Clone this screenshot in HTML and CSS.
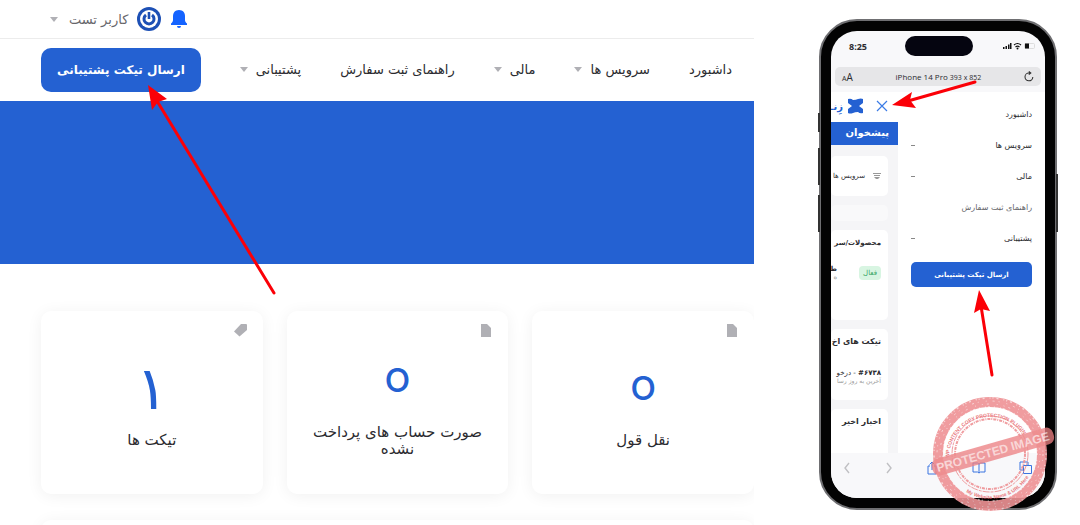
FILE: index.html
```html
<!DOCTYPE html>
<html lang="fa" dir="rtl">
<head>
  <meta charset="UTF-8" />
  <meta name="viewport" content="width=device-width, initial-scale=1.0"/>
  <title>ارسال تیکت پشتیبانی</title>
  <link rel="stylesheet" href="styles.css">
</head>
<body>
  <div class="guide">
    <main class="desktop">
      <div class="topbar">
        <button type="button" class="icon-btn" aria-label="اعلان ها">
          <svg width="18" height="20" viewBox="0 0 18 20" fill="#1463ff"><path d="M9 1c-4 0-6 2.800-6 6.200V11c0 1.500-.6 2.300-2 3.500V16h16v-1.500c-1.400-1.200-2-2-2-3.500V7.200C15 3.800 13 1 9 1z"/><path d="M7 17h4a2 2 0 0 1-4 0z"/></svg>
        </button>
        <svg class="avatar" width="24" height="24" viewBox="0 0 24 24" fill="none"><circle cx="12" cy="12" r="12" fill="#1d50b5"/><circle cx="12" cy="12" r="9" fill="#fff"/><path d="M9 8a5 5 0 1 0 6 0" stroke="#1d50b5" stroke-width="3"/><path d="M12 5v7" stroke="#1d50b5" stroke-width="2.600"/></svg>
        <a href="#" class="user">کاربر تست <span class="caret"></span></a>
      </div>

      <nav class="menu">
        <a href="#">داشبورد</a>
        <a href="#">سرویس ها <span class="caret"></span></a>
        <a href="#">مالی <span class="caret"></span></a>
        <a href="#">راهنمای ثبت سفارش</a>
        <a href="#">پشتیبانی <span class="caret"></span></a>
        <button type="button" class="ticket-btn">ارسال تیکت پشتیبانی</button>
      </nav>

      <div class="hero"></div>

      <div class="cards">
        <a href="#" class="card">
          <svg class="card-icon" width="12" height="13" viewBox="0 0 12 13" fill="#b0b0b5"><path d="M1 0h6l4 4v9H1z"/></svg>
          <span class="count zero">o</span>
          <span class="card-title">نقل قول</span>
        </a>
        <a href="#" class="card">
          <svg class="card-icon" width="12" height="13" viewBox="0 0 12 13" fill="#b0b0b5"><path d="M1 0h6l4 4v9H1z"/></svg>
          <span class="count zero">o</span>
          <span class="card-title">صورت حساب های پرداخت نشده</span>
        </a>
        <a href="#" class="card">
          <svg class="card-icon" width="13" height="13" viewBox="0 0 13 13" fill="#b0b0b5"><path d="M7 0h5q1 0 1 1v5L5.500 12.500 0 7.500z"/></svg>
          <span class="count">۱</span>
          <span class="card-title">تیکت ها</span>
        </a>
      </div>
      <div class="panel"></div>
    </main>

    <aside class="mobile">
      <div class="phone">
        <span class="side-btn mute"></span>
        <span class="side-btn vol-up"></span>
        <span class="side-btn vol-down"></span>
        <span class="side-btn power"></span>
        <div class="screen">
          <div class="status" dir="ltr">
            <span class="time">8:25</span>
            <span class="island"></span>
            <svg width="34" height="8" viewBox="0 0 34 8"><path d="M1 5h1.500v2H1zM3.500 4H5v3H3.500zM6 2.500h1.500V7H6zM8 1h1.500v6H8z" fill="#111"/><path d="M12 3q3.500-3 7 0M13.500 5q2-1.600 4 0" stroke="#111" stroke-width="1.200" fill="none"/><circle cx="15.500" cy="6.500" r="1" fill="#111"/><rect x="22.500" y="1.500" width="10" height="5" rx="1" fill="none" stroke="#ddd"/><path d="M23 1.500h4v5h-4z" fill="#111"/></svg>
          </div>

          <div class="address" dir="ltr">
            <span class="text-size"><small>A</small>A</span>
            <span class="device">iPhone 14 Pro <small>393 x 852</small></span>
            <svg width="10" height="11" viewBox="0 0 10 11" fill="none" stroke="#333" stroke-width="1.100"><path d="M8.800 6A3.900 3.900 0 1 1 5 2h1.500M4.800.5l2 1.500-2 1.700"/></svg>
          </div>

          <div class="view">
            <div class="drawer">
              <a href="#">داشبورد</a>
              <a href="#">سرویس ها <span class="dash"></span></a>
              <a href="#">مالی <span class="dash"></span></a>
              <a href="#" class="light">راهنمای ثبت سفارش</a>
              <a href="#">پشتیبانی <span class="dash"></span></a>
              <button type="button" class="drawer-btn">ارسال تیکت پشتیبانی</button>
            </div>

            <div class="page">
              <div class="page-head">
                <button type="button" class="icon-btn" aria-label="بستن">
                  <svg width="12" height="12" viewBox="0 0 12 12" stroke="#3b7be6" stroke-width="1.200"><path d="M1 1l10 10M11 1L1 11"/></svg>
                </button>
                <svg width="17" height="16" viewBox="0 0 17 16" fill="#2461d2"><path d="M1 1q3-1 5 1 3 0 5-1 3-1 5 0v4l-4 3 4 3v4q-3 1-5-1-3 0-5 1-3 1-5 0v-4l4-3-4-3z"/></svg>
                <span class="brand">زِنـ</span>
              </div>
              <div class="page-title">پیشخوان</div>
              <div class="page-body">
                <div class="box box-link">
                  <svg width="8" height="8" viewBox="0 0 8 8" fill="#999"><path d="M0 1h8v1H0zM1 3h6v1H1zM1 5h6L5 7H3z"/></svg>
                  <span>سرویس ها</span>
                </div>
                <div class="box box-empty"></div>
                <div class="box box-products">
                  <h3>محصولات/سر</h3>
                  <div class="product">
                    <span class="badge">فعال</span>
                    <div>
                      <b>ط</b>
                      <p>ه</p>
                    </div>
                  </div>
                </div>
                <div class="box box-tickets">
                  <h3>تیکت های اخ</h3>
                  <p class="subject"><b>#۶۷۳۸</b> - درخو</p>
                  <p class="updated">آخرین به روز رسا</p>
                </div>
                <div class="box box-news">
                  <h3>اخبار اخیر</h3>
                </div>
              </div>
            </div>
          </div>

          <div class="toolbar" dir="ltr">
            <svg width="8" height="12" viewBox="0 0 8 12" stroke="#c0c0c3" stroke-width="1.400"><path d="M6 1L2 6l4 5"/></svg>
            <svg width="8" height="12" viewBox="0 0 8 12" stroke="#c0c0c3" stroke-width="1.400"><path d="M2 1l4 5-4 5"/></svg>
            <svg width="12" height="14" viewBox="0 0 12 14" stroke="#3b74e0"><path d="M4 5H2v8h8V5H8M6 9V1M3.500 3.500L6 1l2.500 2.500"/></svg>
            <svg width="14" height="12" viewBox="0 0 14 12" stroke="#3b74e0"><path d="M7 2v9M1 1h4.500L7 2l1.500-1H13v9H8.500L7 11l-1.500-1H1z"/></svg>
            <svg width="14" height="14" viewBox="0 0 14 14" stroke="#3b74e0"><path d="M4 9H1V1h8v3M4.500 4.500h8v8h-8z"/></svg>
          </div>
        </div>
      </div>
    </aside>

    <svg class="stamp" width="132" height="120" viewBox="0 0 132 120" direction="ltr">
      <defs>
        <path id="stampTop" d="M25 64A41 41 0 1 1 107 64"/>
        <path id="stampBottom" d="M42 98A45 45 0 0 0 111 60"/>
      </defs>
      <g fill="none" stroke="#ef9295">
        <circle cx="66" cy="60" r="52" stroke-width="10"/>
        <circle cx="66" cy="60" r="38" stroke-width="1" stroke-dasharray="7 1 3 1"/>
        <circle cx="66" cy="60" r="35" stroke-width="2" stroke-dasharray="3 1 1 1"/>
      </g>
      <g fill="none" stroke="#fff" opacity=".6">
        <circle cx="66" cy="60" r="56" stroke-width="1.500" stroke-dasharray="1 3 2 5 1 2"/>
        <circle cx="66" cy="60" r="53" stroke-dasharray="2 4 1 7 1 6"/>
        <circle cx="66" cy="60" r="50" stroke-dasharray="1 6 1 4 2 8"/>
        <circle cx="66" cy="60" r="47" stroke-width="1.500" stroke-dasharray="1 5 1 2 2 4"/>
      </g>
      <g class="stamp-ring">
        <text><textPath href="#stampTop">WP CONTENT COPY PROTECTION PLUGIN</textPath></text>
        <text><textPath href="#stampBottom">My Website Name &amp; URL Here</textPath></text>
      </g>
      <g transform="rotate(-16 69 58)">
        <rect x="6" y="49" width="126" height="17" rx="7" fill="#ec8083" opacity=".85"/>
        <text class="stamp-title" x="69" y="62">PROTECTED IMAGE</text>
      </g>
    </svg>

    <svg class="arrows" width="1080" height="525" viewBox="0 0 1080 525" fill="#fb0007" stroke="#fb0007">
      <g stroke-width="3" stroke-linecap="round">
        <path d="M274 293L157 101"/>
        <path d="M975 82L908 101"/>
        <path d="M992 375L981 306"/>
      </g>
      <g stroke="none">
        <path d="M148 85l4 25 6-8 9-3z"/>
        <path d="M892 105l20-13-2 8 6 8z"/>
        <path d="M979 290l-5 23 7-4 9 2z"/>
      </g>
    </svg>
  </div>
</body>
</html>
```
FILE: styles.css
```css
:root {
  --primary-color: #2461d2;
  --text-color: #2b2b2f;
  --muted: #b0b0b5;
  --shadow: 0 2px 16px rgba(0, 0, 0, 0.06);
}

* {
  margin: 0;
  padding: 0;
  box-sizing: border-box;
}

body {
  background: white;
  color: var(--text-color);
  font-family: "DejaVu Sans", sans-serif;
  font-size: 13px;
  overflow: hidden;
}

a {
  color: inherit;
  text-decoration: none;
}

button {
  border: none;
  font-family: inherit;
  cursor: pointer;
}

svg {
  display: block;
  flex-shrink: 0;
}

.guide {
  position: relative;
  direction: ltr;
  display: flex;
  height: 100vh;
  overflow: hidden;
}

.desktop {
  flex: 1;
  direction: rtl;
  overflow: hidden;
}

.icon-btn {
  background: none;
}

.topbar {
  display: flex;
  flex-direction: row-reverse;
  justify-content: flex-end;
  align-items: center;
  gap: 9px;
  height: 39px;
  padding-left: 50px;
  border-bottom: 1px solid #ececec;
  direction: ltr;
}

.user {
  direction: rtl;
  display: flex;
  align-items: center;
  gap: 11px;
  color: #66666b;
}

.caret {
  border: 4px solid transparent;
  border-top: 5px solid var(--muted);
  border-bottom: none;
}

.menu {
  display: flex;
  justify-content: space-between;
  align-items: center;
  height: 62px;
  padding: 0 22px 2px 41px;
}

.menu a {
  display: flex;
  align-items: center;
  gap: 8px;
  white-space: nowrap;
}

.ticket-btn {
  height: 44px;
  margin-top: 2px;
  padding: 0 16px;
  border-radius: 10px;
  background: var(--primary-color);
  color: white;
  font-size: 12px;
  font-weight: bold;
  white-space: nowrap;
}

.hero {
  height: 163px;
  background: var(--primary-color);
}

.cards {
  display: grid;
  grid-template-columns: repeat(3, 1fr);
  gap: 24px;
  padding: 47px 0 26px 41px;
}

.card {
  position: relative;
  display: flex;
  flex-direction: column;
  align-items: center;
  justify-content: center;
  height: 183px;
  padding: 0 24px;
  border-radius: 10px;
  background: white;
  box-shadow: var(--shadow);
  text-align: center;
}

.card-icon {
  position: absolute;
  top: 13px;
  right: 16px;
}

.count {
  color: var(--primary-color);
  font-size: 60px;
  line-height: 64px;
}

.zero {
  padding-bottom: 8px;
  font-family: Inter, sans-serif;
  font-size: 44px;
  line-height: 56px;
}

.card-title {
  margin-top: 12px;
  font-size: 15px;
  line-height: 17px;
}

.panel {
  height: 60px;
  margin-left: 41px;
  border-radius: 10px;
  box-shadow: var(--shadow);
}

.mobile {
  width: 326px;
  padding: 19px 23px 0 65px;
  direction: rtl;
}

.phone {
  position: relative;
  padding: 10px;
  border: 2px solid #6f6f72;
  border-radius: 38px;
  background: #030303;
}

.side-btn {
  position: absolute;
  left: -3px;
  width: 2px;
  height: 37px;
  background: #333;
}

.mute {
  top: 92px;
  height: 19px;
}

.vol-up {
  top: 127px;
}

.vol-down {
  top: 174px;
}

.power {
  top: 153px;
  right: -3px;
  left: auto;
  height: 58px;
}

.screen {
  border-radius: 26px;
  background: #f8f8fa;
  overflow: hidden;
}

.status {
  display: flex;
  justify-content: space-between;
  align-items: center;
  height: 32px;
  padding: 0 9px 2px 18px;
}

.time {
  font: bold 9px "Open Sans", sans-serif;
}

.island {
  width: 68px;
  height: 20px;
  margin-left: 8px;
  border-radius: 10px;
  background: #050510;
}

.address {
  display: flex;
  justify-content: space-between;
  align-items: center;
  height: 19px;
  margin: 4px 4px 6px;
  padding: 0 7px;
  border-radius: 5px;
  background: #e6e6e8;
  font-family: "Open Sans", sans-serif;
  font-size: 8px;
}

.text-size {
  font-size: 10px;
}

.address small {
  font-size: 7px;
}

.view {
  display: flex;
  height: 361px;
  overflow: hidden;
}

.drawer {
  flex: 1;
  padding: 7px 13px 0;
  background: white;
}

.drawer a {
  display: flex;
  justify-content: space-between;
  align-items: center;
  height: 31px;
  font-size: 8px;
}

.drawer .light {
  color: #66666b;
}

.dash {
  width: 4px;
  height: 1px;
  background: #888;
}

.drawer-btn {
  width: 100%;
  height: 25px;
  margin-top: 8px;
  border-radius: 5px;
  background: var(--primary-color);
  color: white;
  font-size: 7px;
  font-weight: bold;
}

.page {
  width: 67px;
  background: #f5f5f7;
  overflow: hidden;
  white-space: nowrap;
}

.page-head {
  display: flex;
  align-items: center;
  gap: 12px;
  height: 30px;
  padding: 0 10px 2px 0;
  background: white;
}

.page-head svg + .brand {
  margin-right: -8px;
}

.brand {
  color: var(--primary-color);
  font-size: 10px;
  font-weight: bold;
}

.page-title {
  height: 23px;
  padding-right: 9px;
  background: var(--primary-color);
  color: white;
  font-size: 10px;
  font-weight: bold;
  line-height: 22px;
}

.page-body {
  display: flex;
  flex-direction: column;
  gap: 9px;
  padding: 11px 10px 0 0;
  font-size: 7px;
}

.box {
  padding: 8px 7px;
  border-radius: 5px;
  background: white;
}

.box h3 {
  font-size: 8px;
  line-height: 10px;
}

.box p {
  color: #999;
  font-size: 7px;
}

.box .updated {
  font-size: 6px;
}

.box-link {
  display: flex;
  align-items: center;
  gap: 8px;
  height: 40px;
}

.box-empty {
  height: 16px;
  background: #f9f9fa;
}

.box-products {
  height: 90px;
}

.box-products h3 {
  font-size: 7px;
}

.product {
  display: flex;
  align-items: center;
  gap: 22px;
  margin-top: 17px;
}

.badge {
  padding: 3px 4px;
  border-radius: 4px;
  background: #d8f5e2;
  color: #3aa565;
}

.box-tickets {
  height: 71px;
}

.box-tickets .subject {
  margin-top: 22px;
  color: var(--text-color);
}

.box-news {
  height: 60px;
}

.toolbar {
  display: flex;
  justify-content: space-between;
  align-items: center;
  height: 45px;
  padding: 0 12px 16px;
  background: #f8f8fa;
}

.toolbar svg {
  fill: none;
}

/* watermark and pointers lie over both previews */
.stamp {
  position: absolute;
  top: 394px;
  left: 924px;
  opacity: 0.9;
}

.stamp-ring {
  fill: #e86c70;
  font: bold 5px "Liberation Sans", sans-serif;
}

.stamp-title {
  fill: #f9d3d4;
  font: bold 12px "Liberation Sans", sans-serif;
  text-anchor: middle;
}

.arrows {
  position: absolute;
  top: 0;
  left: 0;
  pointer-events: none;
}
```
